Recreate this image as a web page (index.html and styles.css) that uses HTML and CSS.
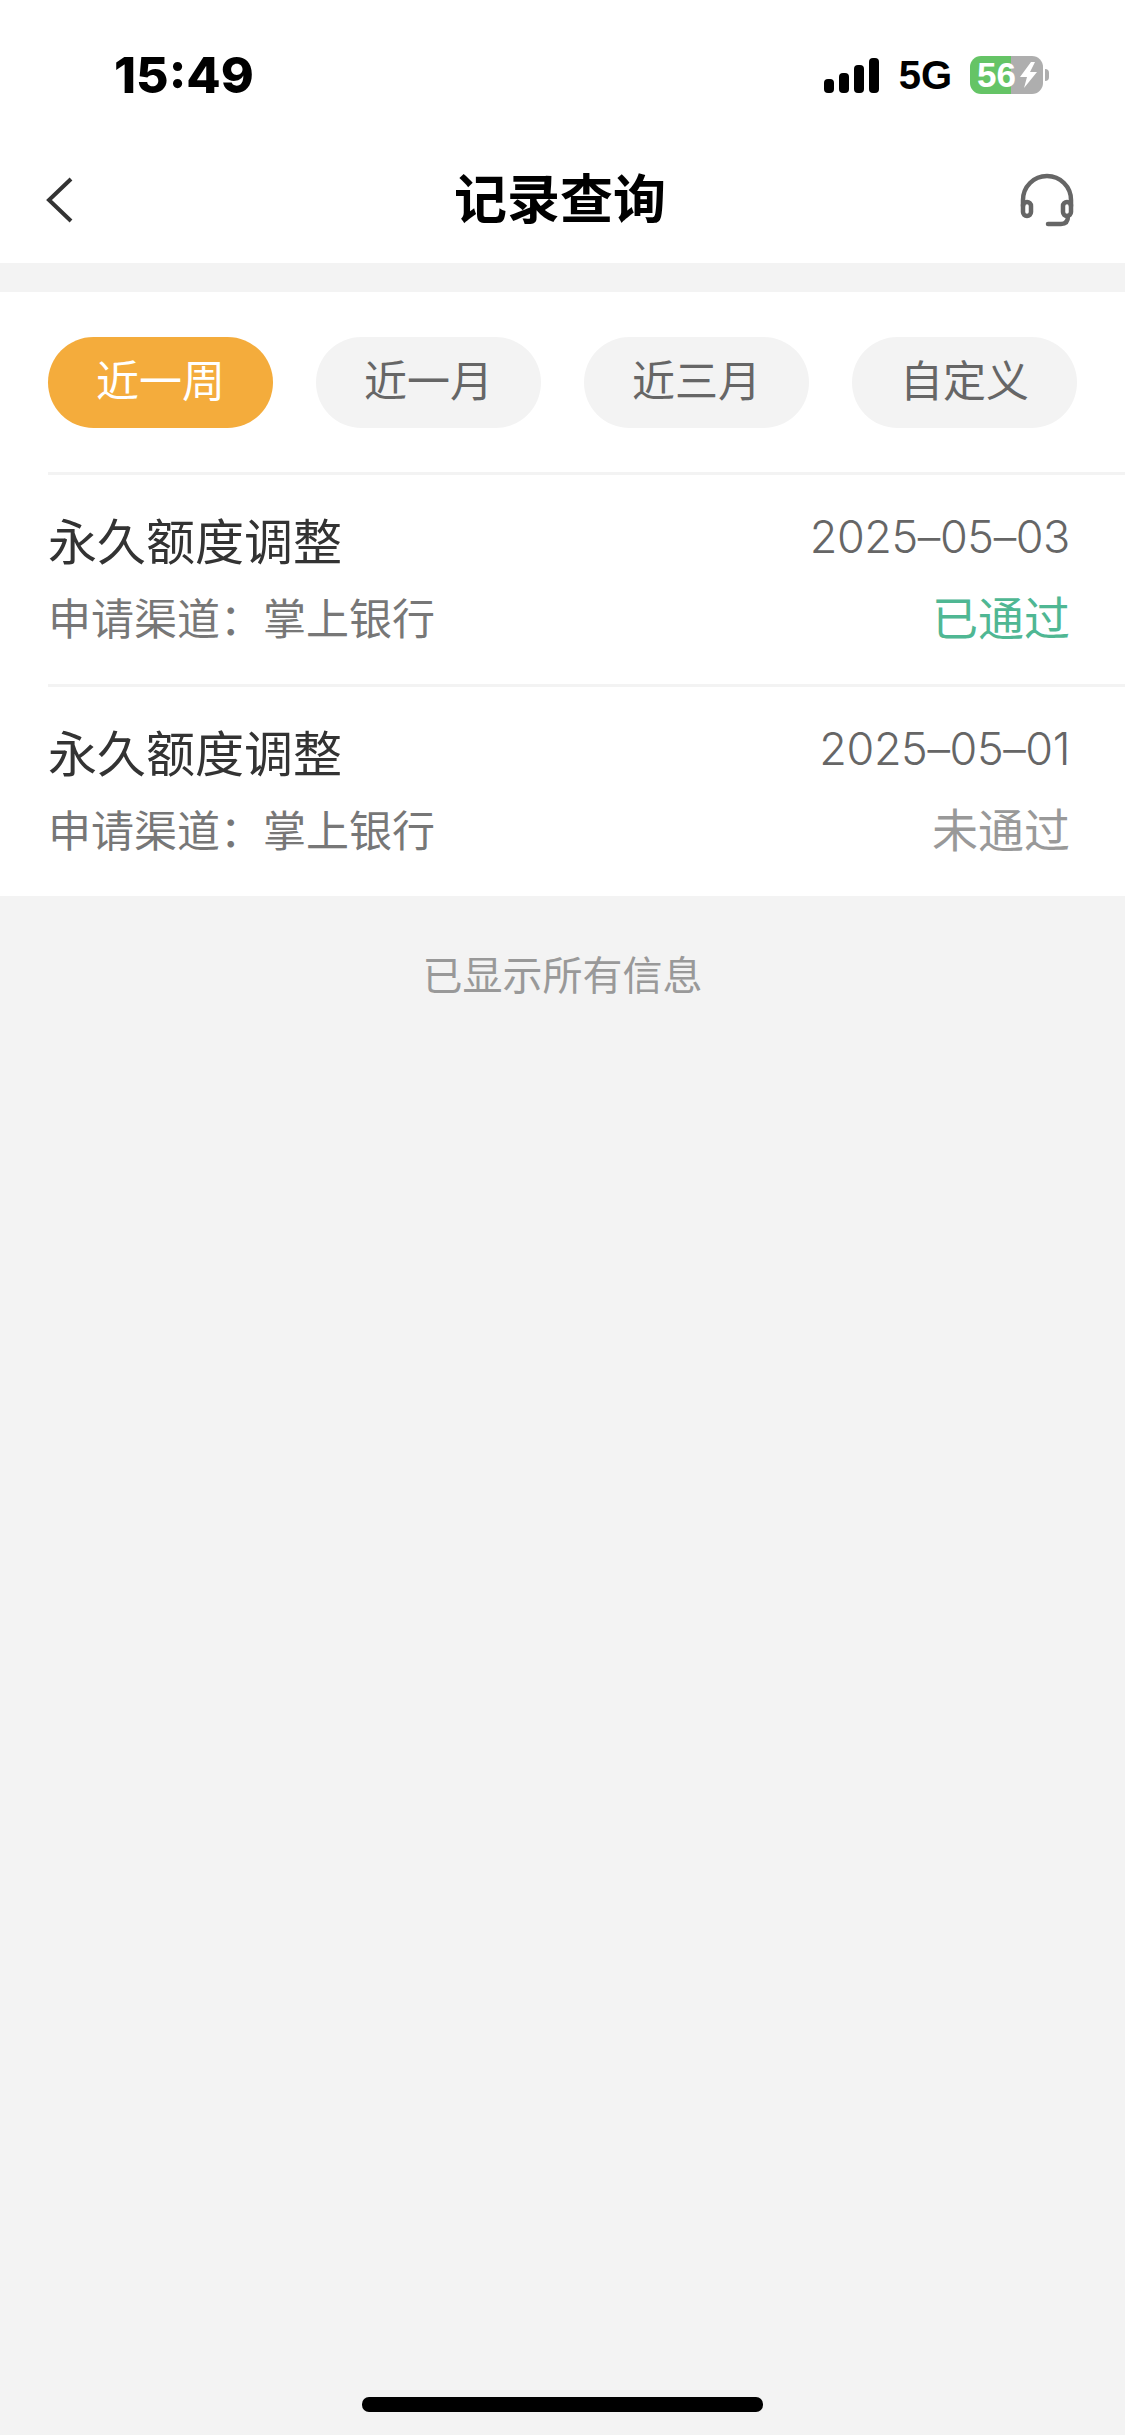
FILE: index.html
```html
<!DOCTYPE html>
<html lang="zh-CN">
<head>
  <meta charset="UTF-8" />
  <title>记录查询</title>
  <meta name="viewport" content="width=device-width, initial-scale=1.0">
  <link rel="stylesheet" href="styles.css">
</head>
<body>
  <div class="page">
    <div class="status-bar">
      <div class="time">15:49</div>
      <div class="status-right">
        <div class="signal">
          <span class="bar bar1"></span>
          <span class="bar bar2"></span>
          <span class="bar bar3"></span>
          <span class="bar bar4"></span>
        </div>
        <div class="network">5G</div>
        <div class="battery">
          <span class="battery-num">56</span>
          <svg class="bolt" width="19" height="26" viewBox="0 0 19 26">
            <path d="M12 0L1 15h7L5 26l13-16h-7l5-10z" fill="#fff" />
          </svg>
        </div>
        <div class="battery-nub"></div>
      </div>
    </div>

    <div class="nav">
      <div class="nav-side">
        <svg width="27" height="46" viewBox="0 0 27 46" fill="none" stroke="#333" stroke-width="4">
          <path d="M25 2L3 23l22 21" />
        </svg>
      </div>
      <div class="nav-title">记录查询</div>
      <div class="nav-side nav-side-right">
        <svg width="54" height="54" viewBox="0 0 54 54" fill="none" stroke="#666" stroke-width="4.500" stroke-linecap="round">
          <path d="M3 33V27a24 24 0 0 1 48 0v6" />
          <rect x="3" y="29" width="8" height="14" rx="4" />
          <rect x="43" y="29" width="8" height="14" rx="4" />
          <path d="M48 43c0 5-2 8-7 8H28" />
        </svg>
      </div>
    </div>

    <div class="panel">
      <div class="filters">
        <div class="pill active">近一周</div>
        <div class="pill">近一月</div>
        <div class="pill">近三月</div>
        <div class="pill">自定义</div>
      </div>

      <div class="record">
        <div class="record-line">
          <div class="record-title">永久额度调整</div>
          <div class="record-date">2025–05–03</div>
        </div>
        <div class="record-line">
          <div class="record-channel">申请渠道：掌上银行</div>
          <div class="record-state passed">已通过</div>
        </div>
      </div>

      <div class="record">
        <div class="record-line">
          <div class="record-title">永久额度调整</div>
          <div class="record-date">2025–05–01</div>
        </div>
        <div class="record-line">
          <div class="record-channel">申请渠道：掌上银行</div>
          <div class="record-state failed">未通过</div>
        </div>
      </div>
    </div>

    <div class="end-note">已显示所有信息</div>

    <div class="home-bar"></div>
  </div>
</body>
</html>
```

FILE: styles.css
```css
* {
  box-sizing: border-box;
}

html,
body {
  margin: 0;
  padding: 0;
}

body {
  background-color: #f3f3f3;
  font-family: "Noto Sans CJK SC", "Liberation Sans", sans-serif;
}

.page {
  display: flex;
  flex-direction: column;
  height: 2435px;
  overflow: hidden;
}

/* status bar */
.status-bar {
  display: flex;
  justify-content: space-between;
  align-items: center;
  height: 150px;
  padding: 0 76px 0 114px;
  background-color: #fff;
}

.time {
  font-family: "Inter", sans-serif;
  font-size: 50px;
  font-weight: 800;
  font-feature-settings: "case";
  color: #000;
}

.status-right {
  display: flex;
  align-items: center;
}

.signal {
  display: flex;
  align-items: flex-end;
  gap: 5px;
  height: 35px;
  margin-right: 20px;
}

.bar {
  width: 10px;
  background-color: #000;
  border-radius: 4px;
}

.bar1 { height: 14px; }
.bar2 { height: 20px; }
.bar3 { height: 28px; }
.bar4 { height: 35px; }

.network {
  font-family: "Liberation Sans", sans-serif;
  font-size: 40px;
  font-weight: bold;
  color: #000;
  margin-right: 18px;
}

.battery {
  display: flex;
  align-items: center;
  width: 73px;
  height: 38px;
  padding-left: 7px;
  border-radius: 11px;
  background: linear-gradient(to right, #65c466 41px, #aeaeae 41px);
}

.battery-num {
  font-family: "Liberation Sans", sans-serif;
  font-size: 35px;
  font-weight: bold;
  color: #fff;
}

.bolt {
  margin-left: 3px;
}

.battery-nub {
  width: 4px;
  height: 12px;
  margin-left: 2px;
  border-radius: 0 6px 6px 0;
  background-color: #aeaeae;
}

/* nav */
.nav {
  display: flex;
  align-items: center;
  height: 113px;
  padding: 0 51px 13px 46px;
  background-color: #fff;
}

.nav-side {
  display: flex;
  flex: 1;
}

.nav-side-right {
  justify-content: flex-end;
}

.nav-title {
  margin-bottom: 8px;
  font-size: 53px;
  font-weight: bold;
  color: #000;
}

/* list panel */
.panel {
  margin-top: 29px;
  background-color: #fff;
}

.filters {
  display: flex;
  justify-content: space-between;
  padding: 45px 48px 44px;
}

.pill {
  display: flex;
  justify-content: center;
  align-items: center;
  width: 225px;
  height: 91px;
  padding-bottom: 10px;
  border-radius: 46px;
  background-color: #f3f3f3;
  font-size: 43px;
  color: #666;
}

.pill.active {
  background-color: #f4ac3c;
  color: #fff;
}

.record {
  display: flex;
  flex-direction: column;
  justify-content: center;
  gap: 14px;
  height: 212px;
  margin-left: 48px;
  padding-right: 55px;
  border-top: 3px solid #f3f3f3;
}

.record-line {
  display: flex;
  justify-content: space-between;
  align-items: center;
  height: 62px;
}

.record-title {
  margin-bottom: 6px;
  font-size: 49px;
  color: #333;
}

.record-date {
  margin-bottom: 10px;
  font-family: "Inter", sans-serif;
  font-size: 45px;
  font-weight: 300;
  letter-spacing: -0.4px;
  color: #666;
}

.record-channel {
  margin-bottom: 3px;
  font-size: 43px;
  color: #777;
}

.record-state {
  margin-bottom: 6px;
  font-size: 46px;
}

.passed {
  color: #4fb793;
}

.failed {
  color: #999;
}

.end-note {
  margin-top: 48px;
  text-align: center;
  font-size: 40px;
  color: #999;
}

.home-bar {
  width: 401px;
  height: 15px;
  margin: auto auto 23px;
  border-radius: 7px;
  background-color: #000;
}
```
